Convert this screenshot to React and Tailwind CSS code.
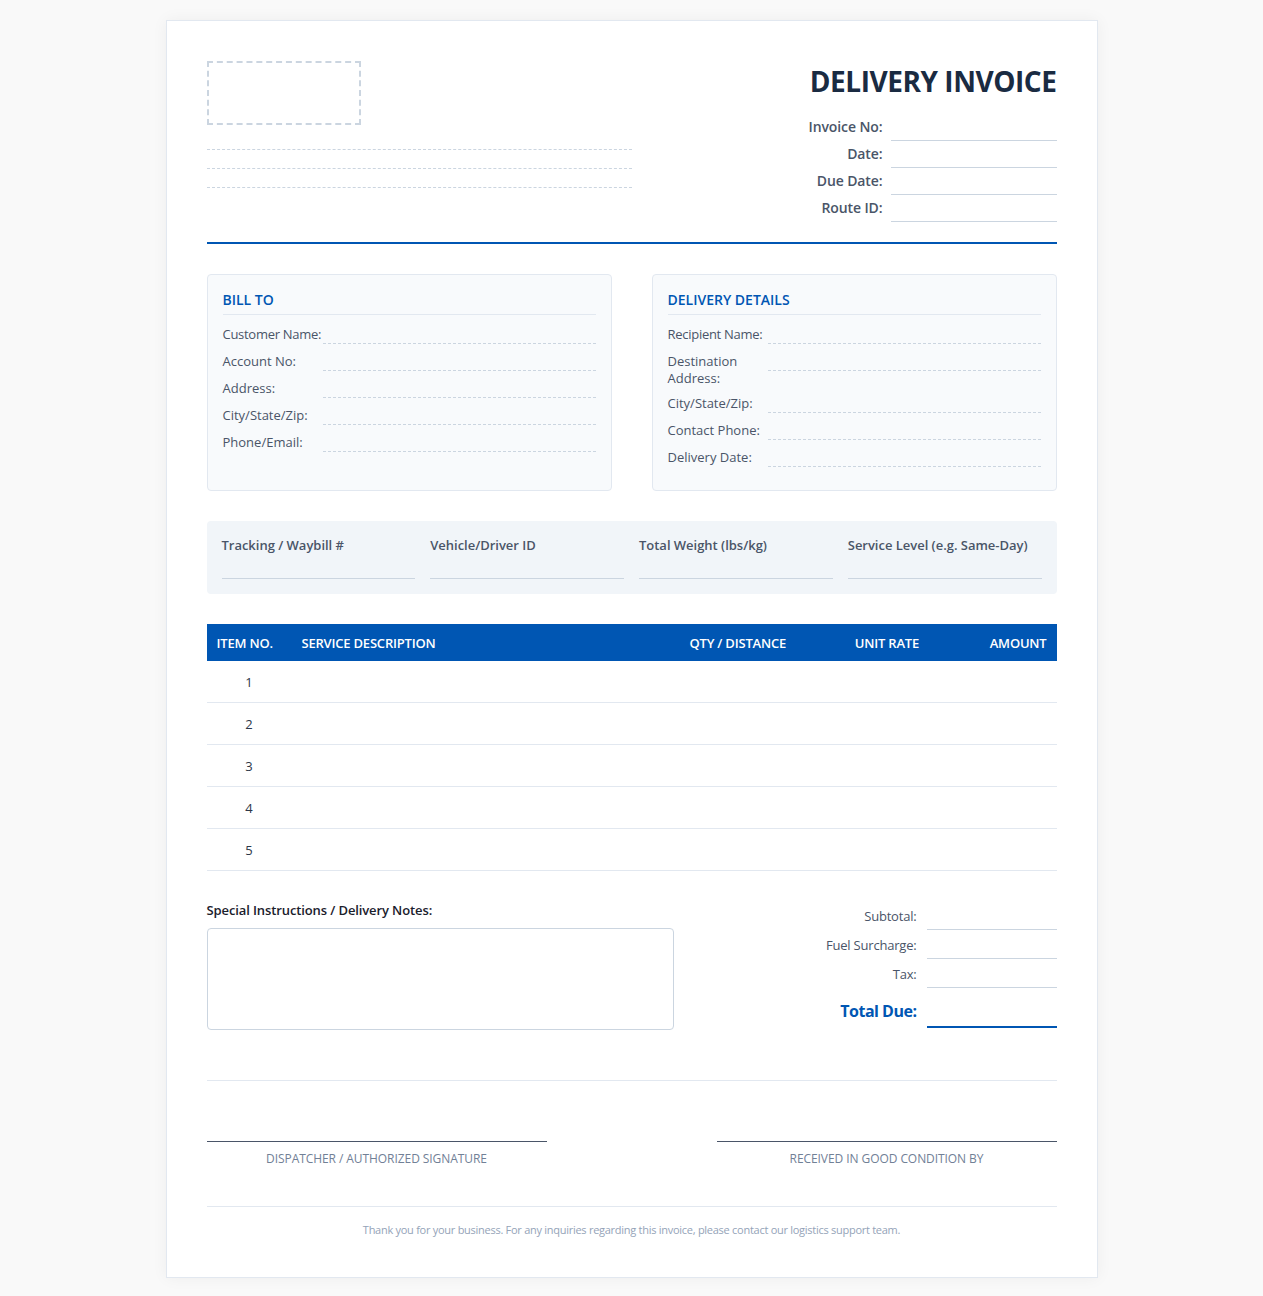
const FONT = "font-['Open_Sans','Noto_Sans',sans-serif]";

function MetaRow({ label }) {
  return (
    <div className="flex justify-end items-end gap-2 h-[27px]">
      <span className="text-sm font-semibold tracking-[-0.1px] text-[#4a5568] leading-[19px] pb-[5px]">{label}</span>
      <span className="w-[166px] h-[27px] border-b border-[#cbd5e0]" />
    </div>
  );
}

function InfoRow({ label, tight }) {
  return (
    <div className="flex items-start mb-2">
      <span className={`w-[100px] shrink-0 text-[13px] leading-[17px] pt-px -mb-px font-medium text-[#4a5568] ${tight ? "tracking-[-0.28px]" : "tracking-[0px]"}`}>{label}</span>
      <span className="flex-1 h-[19px] border-b border-dashed border-[#cbd5e0]" />
    </div>
  );
}

function InfoBox({ title, rows }) {
  return (
    <div className="flex-1 bg-[#f8fafc] border border-[#e2e8f0] rounded p-[15px]">
      <h3 className="text-sm font-semibold leading-[19px] text-[#0056b3] border-b border-[#e2e8f0] pb-[5px] mb-[10px]">{title}</h3>
      {rows.map((r) => <InfoRow key={r} label={r} tight={r === "Customer Name:" || r === "Recipient Name:"} />)}
    </div>
  );
}

function Shipping({ label }) {
  return (
    <div className="flex-1 h-[43px] border-b border-[#cbd5e0]">
      <span className="block text-[13px] font-semibold tracking-[-0.02px] leading-[18px] text-[#4a5568]">{label}</span>
    </div>
  );
}

function Total({ label }) {
  return (
    <div className="flex justify-end items-end gap-[10px] h-[29px]">
      <span className="text-[13px] leading-[18px] tracking-[-0.2px] text-[#4a5568] pb-[5px]">{label}</span>
      <span className="w-[130px] h-[29px] border-b border-[#cbd5e0]" />
    </div>
  );
}

function Sig({ label }) {
  return (
    <div className="w-[340px] border-t border-[#4a5568] pt-[9px] text-center text-xs leading-4 font-medium tracking-[-0.07px] text-[#718096]">{label}</div>
  );
}

export default function App() {
  return (
    <div className={`${FONT} bg-[#f9f9f9] min-h-[1296px] py-[20px]`}>
      <div className="mx-auto w-[932px] h-[1258px] bg-white border border-[#e2e8f0] shadow-[0_0_15px_rgba(0,0,0,0.05)] p-[40px]">
        <div className="flex justify-between h-[183px] border-b-2 border-[#0056b3] mb-[30px]">
          <div className="w-[425px]">
            <div className="w-[154px] h-[64px] border-2 border-dashed border-[#cbd5e0]" />
            <div className="mt-6 border-b border-dashed border-[#cbd5e0] h-px" />
            <div className="mt-[18px] border-b border-dashed border-[#cbd5e0] h-px" />
            <div className="mt-[18px] border-b border-dashed border-[#cbd5e0] h-px" />
          </div>
          <div>
            <h1 className="text-[28px] leading-[38px] font-bold tracking-[-0.45px] text-[#1a2b42] text-right mt-px mb-[14px]">DELIVERY INVOICE</h1>
            <MetaRow label="Invoice No:" />
            <MetaRow label="Date:" />
            <MetaRow label="Due Date:" />
            <MetaRow label="Route ID:" />
          </div>
        </div>

        <div className="flex gap-10 mb-[30px]">
          <InfoBox title="BILL TO" rows={["Customer Name:", "Account No:", "Address:", "City/State/Zip:", "Phone/Email:"]} />
          <InfoBox title="DELIVERY DETAILS" rows={["Recipient Name:", "Destination Address:", "City/State/Zip:", "Contact Phone:", "Delivery Date:"]} />
        </div>

        <div className="flex gap-[15px] h-[73px] bg-[#f1f5f9] rounded p-[15px] mb-[30px]">
          <Shipping label="Tracking / Waybill #" />
          <Shipping label="Vehicle/Driver ID" />
          <Shipping label="Total Weight (lbs/kg)" />
          <Shipping label="Service Level (e.g. Same-Day)" />
        </div>

        <table className="w-full table-fixed border-separate border-spacing-0 mb-[30px]">
          <thead>
            <tr className="bg-[#0056b3] text-white text-[13px] tracking-[-0.2px] h-[37px]">
              <th className="w-[10%] px-[10px] pt-[2px] text-left font-semibold">ITEM NO.</th>
              <th className="w-[45%] px-[10px] pt-[2px] text-left font-semibold">SERVICE DESCRIPTION</th>
              <th className="w-[15%] px-[10px] pt-[2px] text-center font-semibold">QTY / DISTANCE</th>
              <th className="w-[15%] px-[10px] pt-[2px] text-right font-semibold">UNIT RATE</th>
              <th className="w-[15%] px-[10px] pt-[2px] text-right font-semibold">AMOUNT</th>
            </tr>
          </thead>
          <tbody>
            {[1, 2, 3, 4, 5].map((n) => (
              <tr key={n} className="h-[42px] text-[13px] text-[#2d3748]">
                <td className="text-center pt-[2px] border-b border-[#e2e8f0]">{n}</td>
                <td className="border-b border-[#e2e8f0]" />
                <td className="border-b border-[#e2e8f0]" />
                <td className="border-b border-[#e2e8f0]" />
                <td className="border-b border-[#e2e8f0]" />
              </tr>
            ))}
          </tbody>
        </table>

        <div className="flex justify-between h-[180px] border-b border-[#e2e8f0]">
          <div className="w-[467px]">
            <div className="text-[13px] font-semibold tracking-[-0.11px] leading-[18px] text-[#1a202c] mb-[9px]">Special Instructions / Delivery Notes:</div>
            <div className="h-[102px] border border-[#cbd5e0] rounded" />
          </div>
          <div className="w-[300px]">
            <Total label="Subtotal:" />
            <Total label="Fuel Surcharge:" />
            <Total label="Tax:" />
            <div className="flex justify-end items-end gap-[10px] h-[40px]">
              <span className="text-base leading-[22px] font-bold tracking-[-0.5px] text-[#0056b3] pb-[6px]">Total Due:</span>
              <span className="w-[130px] h-[40px] border-b-2 border-[#0056b3]" />
            </div>
          </div>
        </div>

        <div className="flex justify-between mt-[60px] h-[65px]">
          <Sig label="DISPATCHER / AUTHORIZED SIGNATURE" />
          <Sig label="RECEIVED IN GOOD CONDITION BY" />
        </div>

        <div className="border-t border-[#e2e8f0] pt-[15px] text-center text-[11px] leading-[15px] tracking-[-0.27px] text-[#94a3b8]">
          Thank you for your business. For any inquiries regarding this invoice, please contact our logistics support team.
        </div>
      </div>
    </div>
  );
}
